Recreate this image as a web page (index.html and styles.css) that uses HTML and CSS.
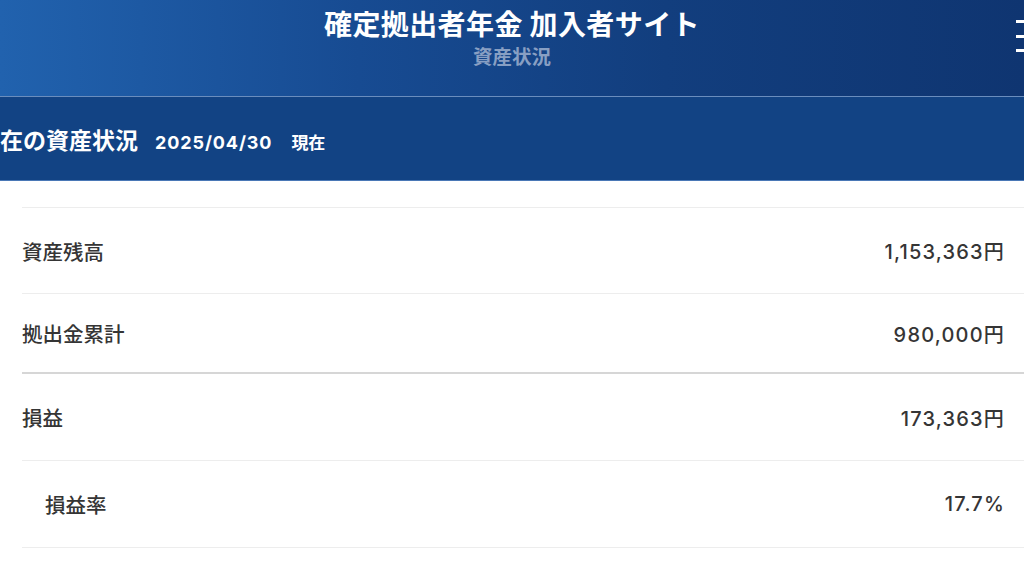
FILE: index.html
```html
<!DOCTYPE html>
<html lang="ja">
<head>
<meta charset="utf-8">
<title>資産状況</title>
<link rel="stylesheet" href="styles.css">
</head>
<body>
<header class="topbar">
  <h1 class="site-title">確定拠出者年金 加入者サイト</h1>
  <p class="page-title">資産状況</p>
  <button class="menu-btn" aria-label="menu"><span></span><span></span><span></span></button>
</header>
<section class="section-bar">
  <h2 class="section-title">現在の資産状況<span class="date">2025/04/30</span><span class="now">現在</span></h2>
</section>
<div class="list">
  <div class="row row-a"><span class="label">資産残高</span><span class="value">1,153,363円</span></div>
  <div class="row row-b"><span class="label">拠出金累計</span><span class="value">980,000円</span></div>
  <div class="row row-c"><span class="label">損益</span><span class="value">173,363円</span></div>
  <div class="row row-d"><span class="label sub">損益率</span><span class="value">17.7%</span></div>
</div>
</body>
</html>
```
FILE: styles.css
```css
* { box-sizing: border-box; }
html, body { margin: 0; padding: 0; }
body {
  width: 1024px;
  height: 576px;
  overflow: hidden;
  background: #ffffff;
  font-family: "Inter", "Noto Sans CJK JP", sans-serif;
}
.topbar {
  position: relative;
  height: 97px;
  background: linear-gradient(90deg, #2162ae 0%, #174b92 35%, #123e7e 65%, #0f3571 100%);
  border-bottom: 1px solid #6a8dbd;
  display: flex;
  flex-direction: column;
  align-items: center;
  padding-top: 6px;
}
.site-title {
  margin: 0;
  font-family: "Noto Sans CJK JP", sans-serif;
  font-size: 28px;
  font-weight: 700;
  line-height: 34px;
  color: #ffffff;
  letter-spacing: 0.4px;
}
.page-title {
  margin: 4px 0 0;
  font-family: "Noto Sans CJK JP", sans-serif;
  font-size: 19.5px;
  font-weight: 700;
  line-height: 24px;
  color: #889fc3;
}
.menu-btn {
  position: absolute;
  left: 1016px;
  top: 20px;
  width: 24px;
  height: 32px;
  padding: 0;
  border: 0;
  background: none;
  display: flex;
  flex-direction: column;
  justify-content: space-between;
}
.menu-btn span {
  display: block;
  width: 24px;
  height: 3px;
  background: #ffffff;
}
.section-bar {
  height: 84px;
  background: #124384;
  border-bottom: 1px solid #4a78b6;
  display: flex;
  align-items: center;
  overflow: hidden;
}
.section-title {
  margin: 0 0 0 -23px;
  font-family: "Noto Sans CJK JP", sans-serif;
  font-size: 23px;
  font-weight: 700;
  color: #ffffff;
  white-space: nowrap;
  display: flex;
  align-items: baseline;
}
.date {
  font-family: "Inter", sans-serif;
  font-size: 18px;
  font-weight: 700;
  margin-left: 17px;
  letter-spacing: 0.9px;
}
.now {
  font-size: 17px;
  font-weight: 700;
  margin-left: 19px;
}
.list {
  margin: 26px 0 0 22px;
}
.row {
  display: flex;
  justify-content: space-between;
  align-items: center;
  padding-right: 19px;
  border-top: 1px solid #ededed;
  color: #353535;
  font-size: 20px;
}
.row-a { height: 86px; }
.row-b { height: 79px; }
.row-c { height: 88px; border-top: 2px solid #d6d6d6; }
.row-d { height: 88px; border-bottom: 1px solid #ededed; }
.label {
  font-family: "Noto Sans CJK JP", sans-serif;
  font-size: 20.5px;
  font-weight: 500;
}
.label.sub { padding-left: 23px; }
.value {
  font-weight: 500;
  letter-spacing: 1.2px;
}
```
